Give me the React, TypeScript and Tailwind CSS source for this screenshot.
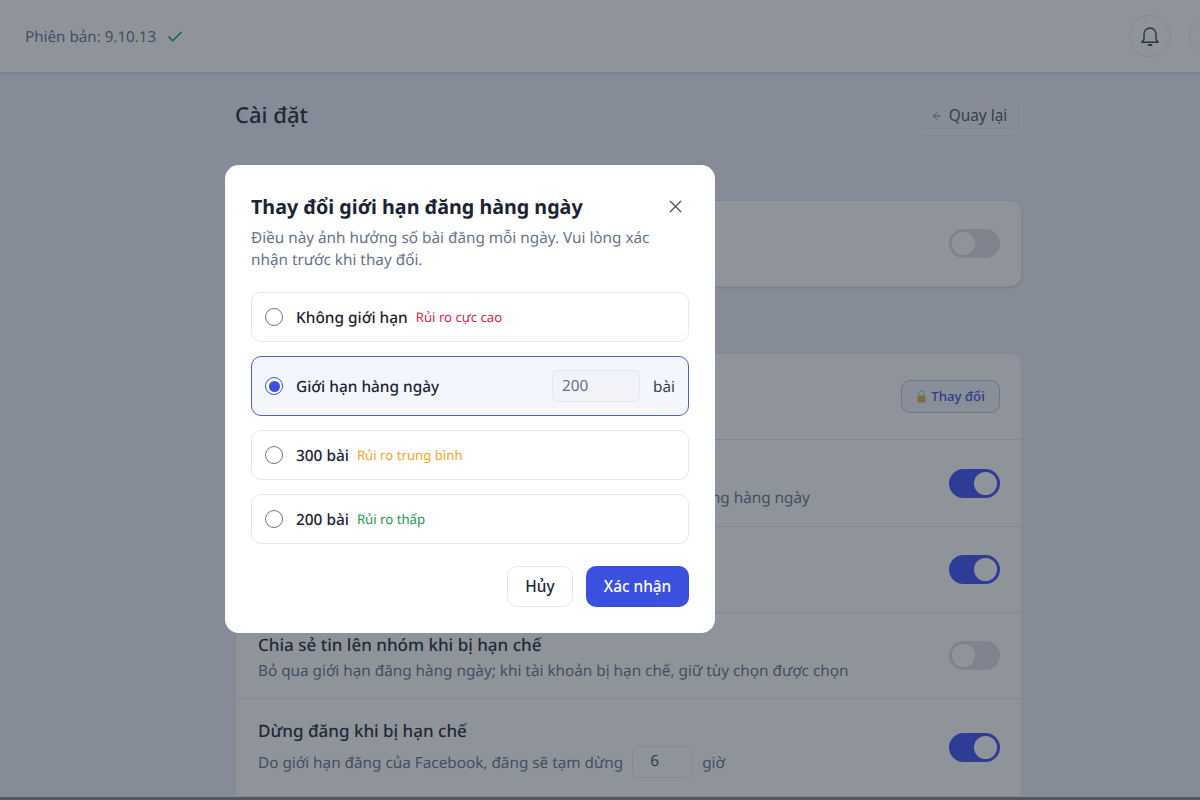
import { ArrowLeft, Check, X } from "lucide-react";

function Toggle({ on }: { on: boolean }) {
  return on ? (
    <div className="flex h-[29px] w-[51px] shrink-0 items-center justify-end rounded-full bg-[#3c4ff5] pr-[3px]">
      <div className="h-[23px] w-[23px] rounded-full bg-white" />
    </div>
  ) : (
    <div className="flex h-[29px] w-[51px] shrink-0 items-center rounded-full bg-[#dcdde2] pl-[3px]">
      <div className="h-[23px] w-[23px] rounded-full bg-white" />
    </div>
  );
}

function Row({ title, desc, on, tall }: { title: string; desc: string; on: boolean; tall?: boolean }) {
  return (
    <div className={`flex items-center justify-between border-t border-[#e2e8f0] pl-[22px] pr-[21px] ${tall ? "h-[87px]" : "h-[86px]"}`}>
      <div className="pt-[4px]">
        <div className="text-[17px] font-medium leading-[26px] text-[#1f2937]">{title}</div>
        <div className="text-[15.3px] leading-[26px] text-[#64748b]">{desc}</div>
      </div>
      <Toggle on={on} />
    </div>
  );
}

function Radio({ on }: { on?: boolean }) {
  return on ? (
    <span className="flex h-[18px] w-[18px] shrink-0 items-center justify-center rounded-full border-[1.5px] border-[#3c50e0] bg-white">
      <span className="h-[11px] w-[11px] rounded-full bg-[#3c50e0]" />
    </span>
  ) : (
    <span className="h-[18px] w-[18px] shrink-0 rounded-full border border-[#767676] bg-white" />
  );
}

function Option({ label, risk, color }: { label: string; risk: string; color: string }) {
  return (
    <div className="flex h-[50px] items-center rounded-[10px] border border-[#e2e8f0] bg-white pl-[13px]">
      <Radio />
      <span className="ml-[13px] pt-[2px] text-[15.4px] font-medium text-[#1c2434]">{label}</span>
      <span className={`ml-[8px] pt-[2px] text-[13.2px] ${color}`}>{risk}</span>
    </div>
  );
}

export default function App() {
  return (
    <div className="relative h-[800px] w-[1200px] overflow-hidden bg-[#edeff7] font-['Noto_Sans',sans-serif] [text-rendering:geometricPrecision]">
      <header className="flex h-[73px] w-[1231px] items-center justify-between border-b border-[#e2e8f0] bg-white pl-[25px] shadow-sm">
        <div className="flex items-center gap-[10px] pt-[2px] text-[15.2px] text-[#64748b]">
          <span>Phiên bản: 9.10.13</span>
          <Check size={18} strokeWidth={2.2} className="text-[#16a34a]" />
        </div>
        <div className="flex items-center gap-[18px]">
          <div className="flex h-[42px] w-[42px] items-center justify-center rounded-full border-[1.5px] border-[#e2e8f0]">
            <svg width="24" height="24" viewBox="0 0 24 24" fill="none" stroke="#334155" strokeWidth="1.4" strokeLinejoin="round" strokeLinecap="round">
              <path d="M6 15.500V10a6 6 0 0 1 12 0v5.500l2.200 2.800H3.800L6 15.500Z" />
              <path d="M10.500 21h3" strokeWidth="1.800" />
            </svg>
          </div>
          <div className="h-[42px] w-[42px] rounded-full border-[1.5px] border-[#e2e8f0]" />
        </div>
      </header>

      <main className="ml-[235px] w-[787px]">
        <div className="mt-[24px] flex h-[37px] items-center justify-between">
          <h1 className="text-[22px] font-medium text-[#1f2937]">Cài đặt</h1>
          <button className="flex h-[37px] w-[106px] items-center justify-center gap-[6px] rounded-[8px] border-[1.5px] border-[#f6f7fa] bg-[#eff1f6] text-[15.4px] text-[#475569]">
            <ArrowLeft size={12} strokeWidth={1.5} />
            Quay lại
          </button>
        </div>

        <section className="mt-[66px] flex h-[87px] items-center justify-between rounded-[12px] border border-[#e2e8f0] bg-white pl-[22px] pr-[21px] shadow-sm">
          <div className="text-[17px] font-medium leading-[26px] text-[#1f2937]">Tự động đăng bài</div>
          <Toggle on={false} />
        </section>

        <section className="mt-[66px] rounded-t-[12px] border border-[#e2e8f0] bg-white">
          <div className="flex h-[85px] items-center justify-between pl-[22px] pr-[21px]">
            <div className="text-[17px] font-medium text-[#1f2937]">Giới hạn đăng hàng ngày</div>
            <button className="flex h-[33px] w-[99px] items-center justify-center gap-[4px] rounded-[9px] border border-[#b8bfe8] bg-[#f3f4fb] text-[13.2px] font-medium text-[#3c50e0]">
              <svg width="11" height="13" viewBox="0 0 12 14">
                <path d="M3 6V4a3 3 0 0 1 6 0v2" fill="none" stroke="#c8ccd4" strokeWidth="1.4" />
                <rect x="1.500" y="6" width="9" height="7.500" rx="1" fill="#d8b040" />
              </svg>
              Thay đổi
            </button>
          </div>
          <Row
            tall
            title="Giới hạn đăng tự động"
            desc="Khi bật hệ thống sẽ tự động dừng đăng khi đạt đến giới hạn đăng hàng ngày"
            on
          />
          <Row title="Đăng tuần tự" desc="Giữ khoảng cách giữa các bài đăng" on />
          <Row
            title="Chia sẻ tin lên nhóm khi bị hạn chế"
            desc="Bỏ qua giới hạn đăng hàng ngày; khi tài khoản bị hạn chế, giữ tùy chọn được chọn"
            on={false}
          />
          <div className="flex h-[98px] items-center justify-between border-t border-[#e2e8f0] pl-[22px] pr-[21px]">
            <div>
              <div className="text-[17px] font-medium leading-[26px] text-[#1f2937]">Dừng đăng khi bị hạn chế</div>
              <div className="mt-[2px] flex h-[32px] items-center text-[15.3px] text-[#64748b]">
                <span className="pt-[3px]">Do giới hạn đăng của Facebook, đăng sẽ tạm dừng</span>
                <span className="ml-[9px] flex h-[32px] w-[61px] items-center rounded-[8px] border border-[#e2e8f0] pl-[17px] text-[#475569]">6</span>
                <span className="ml-[9px] pt-[3px]">giờ</span>
              </div>
            </div>
            <Toggle on />
          </div>
        </section>
      </main>

      <div className="absolute inset-0 bg-[#1f2937]/50" />
      <div className="absolute inset-x-0 bottom-0 h-[3px] bg-[#55585f]" />

      <div className="absolute left-[225px] top-[165px] w-[490px] rounded-[14px] bg-white p-[26px]">
        <div className="flex h-[30px] items-center justify-between pt-[1px]">
          <h2 className="text-[19.7px] font-bold leading-[30px] text-[#1c2434]">Thay đổi giới hạn đăng hàng ngày</h2>
          <X size={21} strokeWidth={1.4} className="mr-[3px] text-[#475569]" />
        </div>
        <p className="mt-[6px] w-[420px] text-[15.3px] leading-[22px] text-[#64748b]">
          Điều này ảnh hưởng số bài đăng mỗi ngày. Vui lòng xác nhận trước khi thay đổi.
        </p>
        <div className="mt-[21px] flex flex-col gap-[14px]">
          <Option label="Không giới hạn" risk="Rủi ro cực cao" color="text-[#d9264a]" />
          <div className="flex h-[60px] items-center rounded-[10px] border-[1.5px] border-[#4f5fd0] bg-[#f4f6fe] pl-[13px] pr-[13px]">
            <Radio on />
            <span className="ml-[13px] pt-[2px] text-[15.4px] font-medium text-[#1c2434]">Giới hạn hàng ngày</span>
            <span className="ml-auto flex h-[32px] w-[88px] items-center rounded-[6px] border border-[#e2e8f0] bg-[#f1f3f9] pl-[9px] text-[15.3px] text-[#64748b]">200</span>
            <span className="ml-[13px] pt-[2px] text-[15.3px] text-[#374151]">bài</span>
          </div>
          <Option label="300 bài" risk="Rủi ro trung bình" color="text-[#f5a524]" />
          <Option label="200 bài" risk="Rủi ro thấp" color="text-[#22994f]" />
        </div>
        <div className="mt-[22px] flex justify-end gap-[13px]">
          <button className="h-[41px] w-[66px] rounded-[10px] border border-[#e2e8f0] bg-white text-[15.4px] font-medium text-[#1c2434]">Hủy</button>
          <button className="h-[41px] w-[103px] rounded-[10px] bg-[#3c50e0] text-[15.4px] font-medium text-white">Xác nhận</button>
        </div>
      </div>
    </div>
  );
}
